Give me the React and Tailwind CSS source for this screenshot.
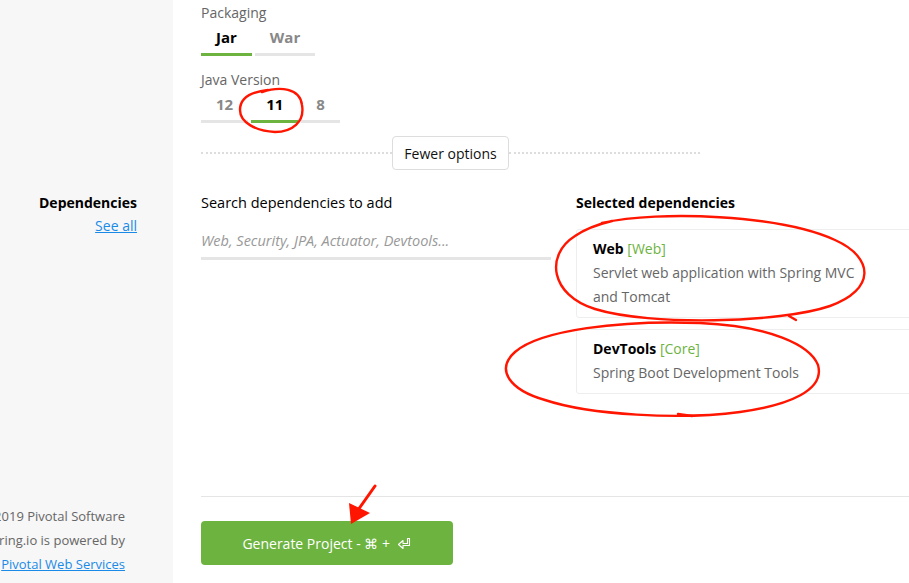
import React from "react";

const font = "font-['Open_Sans',_'Liberation_Sans',_sans-serif]";

const Tab = ({ label, active }) => (
  <button
    className={`px-[15px] pt-[5px] pb-[6px] text-[15px] leading-[20px] font-bold border-b-[3px] ${
      active ? "text-black border-[#6db33f]" : "text-[#888] border-[#e5e5e5]"
    }`}
  >
    {label}
  </button>
);

const DependencyCard = ({ name, group, description }) => (
  <div className="border border-[#eee] rounded-[3px] px-[16px] pt-[9px] pb-[8px] w-[360px]">
    <div className="text-[14px] leading-[20px]">
      <span className="font-bold text-black">{name}</span>{" "}
      <span className="text-[#6db33f]">[{group}]</span>
    </div>
    <p className="mt-[2px] text-[14px] leading-[24px] text-[#666] max-w-[275px]">{description}</p>
  </div>
);

const ReturnKey = () => (
  <svg width="15" height="14" viewBox="0 0 15 14" className="inline-block ml-[3px] -mt-[2px]">
    <path d="M12.5 1.5 V8.5 H6 V11.5 L1.5 7.5 L6 3.5 V6.5 H10.5 V1.5 Z" fill="none" stroke="white" strokeWidth="1.1" strokeLinejoin="round" />
  </svg>
);

const Annotations = () => (
  <svg className="absolute inset-0 pointer-events-none" width="909" height="583" viewBox="0 0 909 583">
    <g fill="none" stroke="#ff1500" strokeWidth="2.4" strokeLinecap="round">
      <path d="M 262 92 C 280 86, 300 88, 302 105 C 305 122, 292 132, 275 132 C 255 131, 240 122, 240 110 C 240 98, 250 92, 268 90" />
      <path d="M 602 223 C 660 210, 780 215, 835 240 C 875 258, 875 290, 830 306 C 780 323, 650 326, 595 309 C 550 295, 545 255, 575 236 C 585 229, 595 225, 612 221" />
      <path d="M 789 316 L 796 320" />
      <path d="M 515 352 C 540 330, 620 320, 700 323 C 770 326, 810 345, 818 365 C 825 390, 790 405, 740 412 C 680 420, 590 415, 545 400 C 510 390, 495 370, 515 352" />
      <path d="M 678 414 L 692 416" />
      <path d="M 375 486 L 358 510" strokeWidth="3" />
    </g>
    <polygon points="351,524 349,503 370,513" fill="#ff1500" />
  </svg>
);

export default function App() {
  return (
    <div className={`relative w-[909px] h-[583px] overflow-hidden bg-white flex flex-col ${font}`}>
      {/* options row */}
      <div className="flex">
        <div className="w-[173px] shrink-0 bg-[#f7f7f7]" />
        <div className="pl-[28px] pt-[4px]">
          <div className="text-[14px] leading-[18px] text-[#666]">Packaging</div>
          <div className="flex gap-[3px]">
            <Tab label="Jar" active />
            <Tab label="War" />
          </div>
          <div className="mt-[15px] text-[14px] leading-[18px] text-[#666]">Java Version</div>
          <div className="flex gap-[3px]">
            <Tab label="12" />
            <Tab label="11" active />
            <Tab label="8" />
          </div>
          <div className="mt-[13px] w-[499px] flex items-center">
            <div className="flex-1 border-t-2 border-dotted border-[#ddd]" />
            <button className="h-[34px] px-[11px] border border-[#ddd] rounded-[4px] text-[14px] text-[#111]">
              Fewer options
            </button>
            <div className="flex-1 border-t-2 border-dotted border-[#ddd]" />
          </div>
        </div>
      </div>

      {/* dependencies row */}
      <div className="flex flex-1">
        <div className="w-[173px] shrink-0 bg-[#f7f7f7] pr-[36px] pt-[23px] text-right">
          <div className="text-[14px] leading-[20px] font-bold text-black">Dependencies</div>
          <a href="#" className="text-[14px] leading-[20px] text-[#1a8ae8] underline">See all</a>
        </div>
        <div className="pl-[28px] pt-[23px] flex gap-[25px]">
          <div className="w-[350px]">
            <div className="text-[14.5px] leading-[20px] text-black">Search dependencies to add</div>
            <input
              type="text"
              placeholder="Web, Security, JPA, Actuator, Devtools..."
              className="mt-[12px] w-full pt-[6px] pb-[6px] text-[14.5px] leading-[20px] italic border-b-[3px] border-[#e5e5e5] outline-none placeholder:text-[#999]"
            />
          </div>
          <div>
            <div className="text-[14px] leading-[20px] font-bold text-black">Selected dependencies</div>
            <div className="mt-[16px] flex flex-col gap-[11px]">
              <DependencyCard name="Web" group="Web" description="Servlet web application with Spring MVC and Tomcat" />
              <DependencyCard name="DevTools" group="Core" description="Spring Boot Development Tools" />
            </div>
          </div>
        </div>
      </div>

      {/* actions row */}
      <div className="flex h-[87px]">
        <div className="w-[173px] shrink-0 bg-[#f7f7f7] pr-[48px] pt-[8px] overflow-hidden text-[13px] leading-[24px] text-[#666]">
          <div className="flex justify-end whitespace-nowrap">© 2019 Pivotal Software</div>
          <div className="flex justify-end whitespace-nowrap">start.spring.io is powered by</div>
          <div className="flex justify-end whitespace-nowrap">
            <a href="#" className="text-[#1a8ae8] underline">Pivotal Web Services</a>
          </div>
        </div>
        <div className="flex-1 pl-[28px]">
          <div className="border-t border-[#e5e5e5] pt-[24px]">
            <button className="w-[252px] h-[44px] rounded-[4px] bg-[#6db33f] text-white text-[14px]">
              Generate Project - ⌘ + <ReturnKey />
            </button>
          </div>
        </div>
      </div>

      <Annotations />
    </div>
  );
}
